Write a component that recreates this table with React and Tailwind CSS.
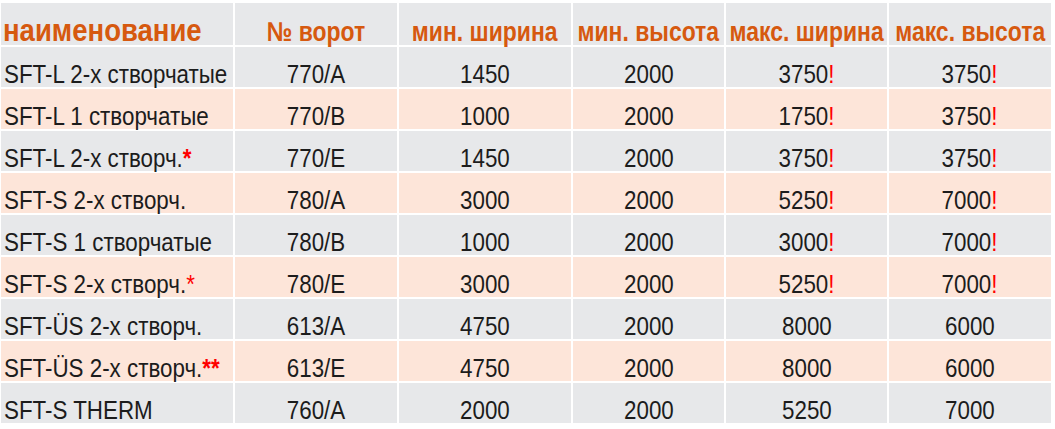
const rows = [
  { name: "SFT-L 2-х створчатые", star: "", no: "770/A", minW: "1450", minH: "2000", maxW: "3750", maxH: "3750", warn: true },
  { name: "SFT-L 1 створчатые", star: "", no: "770/B", minW: "1000", minH: "2000", maxW: "1750", maxH: "3750", warn: true },
  { name: "SFT-L 2-х створч.", star: "*", no: "770/E", minW: "1450", minH: "2000", maxW: "3750", maxH: "3750", warn: true },
  { name: "SFT-S 2-х створч.", star: "", no: "780/A", minW: "3000", minH: "2000", maxW: "5250", maxH: "7000", warn: true },
  { name: "SFT-S 1 створчатые", star: "", no: "780/B", minW: "1000", minH: "2000", maxW: "3000", maxH: "7000", warn: true },
  { name: "SFT-S 2-х створч.", star: "*", thin: true, no: "780/E", minW: "3000", minH: "2000", maxW: "5250", maxH: "7000", warn: true },
  { name: "SFT-ÜS 2-х створч.", star: "", no: "613/A", minW: "4750", minH: "2000", maxW: "8000", maxH: "6000", warn: false },
  { name: "SFT-ÜS 2-х створч.", star: "**", no: "613/E", minW: "4750", minH: "2000", maxW: "8000", maxH: "6000", warn: false },
  { name: "SFT-S THERM", star: "", no: "760/A", minW: "2000", minH: "2000", maxW: "5250", maxH: "7000", warn: false },
];

const cols = "grid grid-cols-[232px_162px_172px_151px_161px_162px] gap-0.5";
const font = { fontFamily: '"Liberation Sans", Arial, sans-serif' };

// the source picture is squeezed sideways, so text is narrowed with scale-x
function Num({ value, warn, bg }) {
  return (
    <div className={`${bg} flex items-end justify-center whitespace-nowrap text-[26px] leading-[26px] text-[#1c1c1c]`}>
      <span className="inline-block scale-x-[0.86]">
        {value}
        {warn && <span className="text-[#ff0000]">!</span>}
      </span>
    </div>
  );
}

export default function App() {
  return (
    <div className="min-h-[429px] w-[1055px] bg-white pl-px pt-[3px]" style={font}>
      <div className="flex flex-col gap-0.5">
        <div className={`${cols} h-[42px]`}>
          <div className="flex items-end whitespace-nowrap bg-[#e7e8ea] pl-0.5 text-[32px] font-bold leading-[29px] text-[#d6590f]">
            <span className="inline-block origin-left scale-x-[0.86]">наименование</span>
          </div>
          {["№ ворот", "мин. ширина", "мин. высота", "макс. ширина", "макс. высота"].map((h) => (
            <div
              key={h}
              className="flex items-end justify-center whitespace-nowrap bg-[#e7e8ea] text-[27px] font-bold leading-[25px] text-[#d6590f]"
            >
              <span className="inline-block scale-x-[0.85]">{h}</span>
            </div>
          ))}
        </div>

        {rows.map((r, i) => {
          const bg = i % 2 === 0 ? "bg-[#e7e8ea]" : "bg-[#fde5d9]";
          return (
            <div key={i} className={`${cols} h-10`}>
              <div className={`${bg} flex items-end whitespace-nowrap pl-[3px] text-[26px] leading-[26px] text-[#1c1c1c]`}>
                <span className="inline-block origin-left scale-x-[0.86]">
                  {r.name}
                  {r.star && (
                    <span className={`text-[#ff0000] ${r.thin ? "font-normal" : "font-bold"}`}>{r.star}</span>
                  )}
                </span>
              </div>
              <Num bg={bg} value={r.no} />
              <Num bg={bg} value={r.minW} />
              <Num bg={bg} value={r.minH} />
              <Num bg={bg} value={r.maxW} warn={r.warn} />
              <Num bg={bg} value={r.maxH} warn={r.warn} />
            </div>
          );
        })}
      </div>
    </div>
  );
}
